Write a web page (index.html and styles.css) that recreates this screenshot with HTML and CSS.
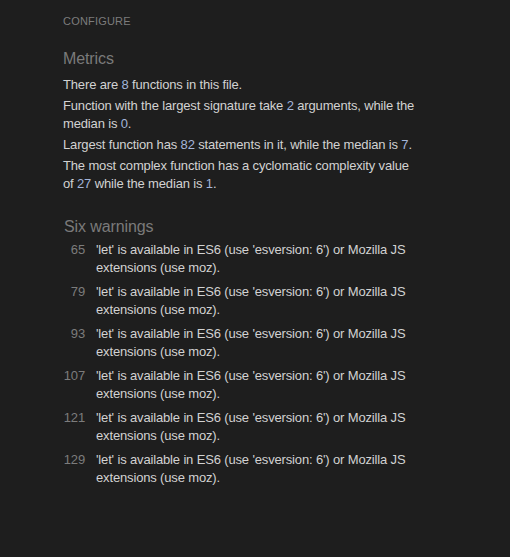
FILE: index.html
```html
<!DOCTYPE html>
<html>
<head>
<meta charset="utf-8">
<link rel="stylesheet" href="styles.css">
</head>
<body>
<div class="panel">
  <div class="label">CONFIGURE</div>
  <h2 class="heading">Metrics</h2>
  <div class="metrics">
    <p>There are <span class="num">8</span> functions in this file.</p>
    <p>Function with the largest signature take <span class="num">2</span> arguments, while the median is <span class="num">0</span>.</p>
    <p>Largest function has <span class="num">82</span> statements in it, while the median is <span class="num">7</span>.</p>
    <p>The most complex function has a cyclomatic complexity value of <span class="num">27</span> while the median is <span class="num">1</span>.</p>
  </div>
  <h2 class="heading warn-heading">Six warnings</h2>
  <ul class="warnings">
    <li><span class="line">65</span><span class="msg">'let' is available in ES6 (use 'esversion: 6') or Mozilla JS extensions (use moz).</span></li>
    <li><span class="line">79</span><span class="msg">'let' is available in ES6 (use 'esversion: 6') or Mozilla JS extensions (use moz).</span></li>
    <li><span class="line">93</span><span class="msg">'let' is available in ES6 (use 'esversion: 6') or Mozilla JS extensions (use moz).</span></li>
    <li><span class="line">107</span><span class="msg">'let' is available in ES6 (use 'esversion: 6') or Mozilla JS extensions (use moz).</span></li>
    <li><span class="line">121</span><span class="msg">'let' is available in ES6 (use 'esversion: 6') or Mozilla JS extensions (use moz).</span></li>
    <li><span class="line">129</span><span class="msg">'let' is available in ES6 (use 'esversion: 6') or Mozilla JS extensions (use moz).</span></li>
  </ul>
</div>
</body>
</html>
```
FILE: styles.css
```css
html, body {
  margin: 0;
  padding: 0;
  background: #1e1e1e;
  height: 100%;
}
body {
  font-family: "Liberation Sans", Arial, sans-serif;
  color: #d2d2d2;
}
.panel {
  padding: 14px 0 0 63px;
  width: 355px;
}
.label {
  font-size: 11px;
  color: #7c7c7c;
  letter-spacing: 0.2px;
  line-height: 14px;
}
.heading {
  font-size: 16px;
  font-weight: normal;
  color: #7a7a7a;
  margin: 21px 0 7px 0;
  line-height: 20px;
  letter-spacing: -0.1px;
}
.metrics p {
  margin: 0 0 3px 0;
  font-size: 13px;
  line-height: 18px;
  letter-spacing: -0.15px;
}
.num {
  color: #a3b5d9;
}
.warn-heading {
  margin-top: 24px;
  margin-bottom: 4px;
  padding-left: 1px;
}
.warnings {
  list-style: none;
  margin: 0;
  padding: 0;
}
.warnings li {
  display: flex;
  font-size: 13px;
  line-height: 18px;
  margin-bottom: 6px;
  letter-spacing: -0.15px;
}
.line {
  width: 22px;
  text-align: right;
  color: #7c7c7c;
  flex: none;
  margin-right: 11px;
}
.msg {
  flex: 1;
}
```
